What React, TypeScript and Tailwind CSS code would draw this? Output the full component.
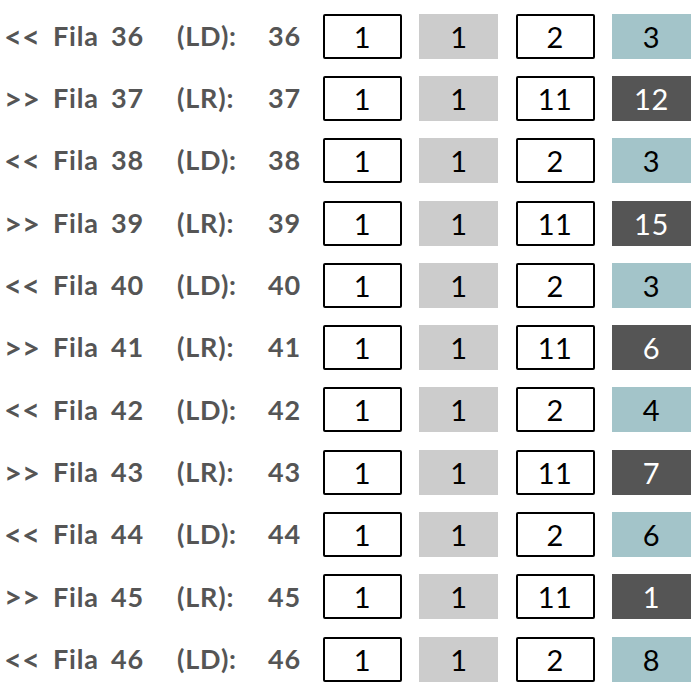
import React from 'react';

const rows = [
   { n: 36, dir: 'LD', c: 2, d: 3 },
   { n: 37, dir: 'LR', c: 11, d: 12 },
   { n: 38, dir: 'LD', c: 2, d: 3 },
   { n: 39, dir: 'LR', c: 11, d: 15 },
   { n: 40, dir: 'LD', c: 2, d: 3 },
   { n: 41, dir: 'LR', c: 11, d: 6 },
   { n: 42, dir: 'LD', c: 2, d: 4 },
   { n: 43, dir: 'LR', c: 11, d: 7 },
   { n: 44, dir: 'LD', c: 2, d: 6 },
   { n: 45, dir: 'LR', c: 11, d: 1 },
   { n: 46, dir: 'LD', c: 2, d: 8 },
];

const Box = ({ value, className }: { value: number; className: string }) => (
   <div
      className={`w-[79px] h-[45px] flex items-center justify-center text-[29px] leading-none tracking-[0.5px] ${className}`}
   >
      {value}
   </div>
);

const App = () => {
   return (
      <div className="w-[695px] h-[695px] bg-white pt-[5px] font-['Lato','Liberation_Sans',sans-serif] overflow-hidden">
         {rows.map((r) => {
            const ld = r.dir === 'LD';
            return (
               <div key={r.n} className="h-[62.3px] flex items-center">
                  {/* Row label */}
                  <div className="flex items-center font-bold text-[27px] tracking-[0.8px] [word-spacing:5px] text-[#555555]">
                     <span className="w-[53px] pl-[4px] text-[31px] tracking-[0px] leading-none">{ld ? '<<' : '>>'}</span>
                     <span className="w-[124px]">Fila {r.n}</span>
                     <span className="w-[91px]">({r.dir}):</span>
                     <span className="w-[38px]">{r.n}</span>
                  </div>

                  {/* Values */}
                  <div className="ml-[17px] flex items-center gap-[17.3px] text-black">
                     <Box value={1} className="border-2 border-black rounded-[2px]" />
                     <Box value={1} className="bg-[#cccccc]" />
                     <Box value={r.c} className="border-2 border-black rounded-[2px]" />
                     <Box
                        value={r.d}
                        className={ld ? 'bg-[#a3c4c9]' : 'bg-[#555555] text-white'}
                     />
                  </div>
               </div>
            );
         })}
      </div>
   );
};

export default App;
